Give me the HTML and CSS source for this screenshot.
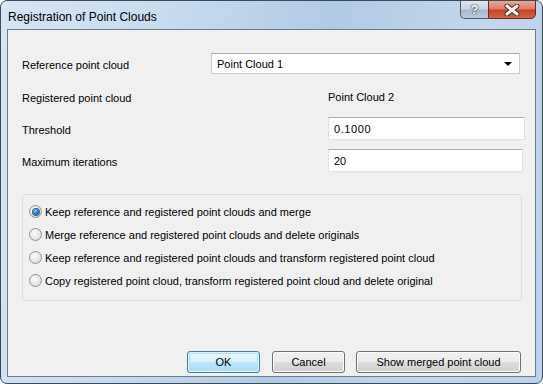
FILE: index.html
```html
<!DOCTYPE html>
<html>
<head>
  <title>Registration of Point Clouds</title>
  <meta charset="UTF-8">
  <link rel="stylesheet" href="styles.css">
</head>
<body>
  <div class="window">
    <div class="titlebar">
      <span class="title">Registration of Point Clouds</span>
      <div class="caption-btns">
        <div class="cap help">?</div>
        <div class="cap close">
          <svg width="16" height="12" viewBox="0 0 16 12">
            <path d="M3 2 L13 10 M13 2 L3 10" stroke="#4a2a24" stroke-width="5" stroke-linecap="round"/>
            <path d="M3 2 L13 10 M13 2 L3 10" stroke="#ffffff" stroke-width="3" stroke-linecap="round"/>
          </svg>
        </div>
      </div>
    </div>

    <div class="client">
      <!-- point cloud settings -->
      <div class="form">
        <div class="row row-combo">
          <span class="label label-short">Reference point cloud</span>
          <div class="combo">
            <span>Point Cloud 1</span>
            <span class="arrow"></span>
          </div>
        </div>
        <div class="row row-text">
          <span class="label">Registered point cloud</span>
          <span class="value">Point Cloud 2</span>
        </div>
        <div class="row row-input">
          <span class="label">Threshold</span>
          <div class="textbox wide">0.1000</div>
        </div>
        <div class="row row-input">
          <span class="label">Maximum iterations</span>
          <div class="textbox">20</div>
        </div>
      </div>

      <!-- result mode -->
      <div class="group">
        <label class="radio-row"><span class="radio checked"></span>Keep reference and registered point clouds and merge</label>
        <label class="radio-row"><span class="radio"></span>Merge reference and registered point clouds and delete originals</label>
        <label class="radio-row"><span class="radio"></span>Keep reference and registered point clouds and transform registered point cloud</label>
        <label class="radio-row"><span class="radio"></span>Copy registered point cloud, transform registered point cloud and delete original</label>
      </div>

      <div class="buttons">
        <div class="btn btn-default">OK</div>
        <div class="btn">Cancel</div>
        <div class="btn btn-wide">Show merged point cloud</div>
      </div>
    </div>
  </div>
</body>
</html>
```

FILE: styles.css
```css
body {
  margin: 0;
  font-family: "Liberation Sans", Arial, sans-serif;
  font-size: 11px;
  color: #000;
  background: #ffffff;
}
.window {
  width: 543px;
  height: 384px;
  box-sizing: border-box;
  border: 1px solid #3f4a57;
  border-radius: 7px;
  background: linear-gradient(100deg, #d6e5f4 0%, #c6daef 30%, #b1cae5 55%, #c3d7ed 80%, #bcd2ea 100%);
  display: flex;
  flex-direction: column;
  overflow: hidden;
}
.titlebar {
  height: 28px;
  display: flex;
  justify-content: space-between;
  align-items: flex-start;
}
.title {
  font-size: 12px;
  margin: 9px 0 0 7px;
  color: #000;
}
.caption-btns {
  display: flex;
  margin-right: 6px;
  margin-top: -1px;
}
.cap {
  height: 19px;
  box-sizing: border-box;
  border: 1px solid #4b5b70;
  display: flex;
  align-items: center;
  justify-content: center;
}
.help {
  width: 28px;
  border-right: none;
  border-radius: 0 0 0 5px;
  background: linear-gradient(#dfe7f0 0%, #c9d5e2 45%, #a8b9cc 55%, #bccbdb 100%);
  color: #fff;
  font-weight: bold;
  font-size: 13px;
  text-shadow: 0 0 1px #3a4a5c, 0 0 1px #3a4a5c, 0 0 2px #3a4a5c;
}
.close {
  width: 48px;
  border-radius: 0 0 5px 0;
  border-color: #6b2a1f;
  background: linear-gradient(#e9a99b 0%, #dc7d68 45%, #c7432a 55%, #d0664b 100%);
}
.client {
  flex: 1;
  margin: 0 6px 6px 6px;
  border: 1px solid #6d7a8a;
  background: #f0f0f0;
  display: flex;
  flex-direction: column;
}
.form {
  padding: 23px 0 0 14px;
}
.row {
  display: flex;
  align-items: center;
}
.label {
  width: 306px;
  padding-top: 2px;
}
.label-short {
  width: 189px;
}
.row-combo {
  height: 21px;
}
.row-text {
  height: 22px;
  margin-top: 12px;
}
.row-input {
  height: 23px;
  margin-top: 9px;
}
.combo {
  width: 309px;
  height: 21px;
  box-sizing: border-box;
  border: 1px solid #c8cacf;
  border-top-color: #a9abb1;
  background: #fff;
  display: flex;
  align-items: center;
  justify-content: space-between;
  padding: 0 7px 0 5px;
}
.arrow {
  width: 0;
  height: 0;
  border-left: 4px solid transparent;
  border-right: 4px solid transparent;
  border-top: 4px solid #000;
  margin-top: 1px;
}
.textbox {
  width: 195px;
  height: 23px;
  box-sizing: border-box;
  border: 1px solid #dfe2e8;
  border-top-color: #abadb3;
  background: #fff;
  padding: 0 5px;
  display: flex;
  align-items: center;
}
.textbox.wide {
  width: 197px;
  letter-spacing: 0.6px;
}
.group {
  margin: 22px 13px 0 14px;
  border: 1px solid #d5dfe5;
  border-radius: 3px;
  padding: 5px 0 8px 5px;
}
.radio-row {
  height: 23px;
  display: flex;
  align-items: center;
}
.radio {
  width: 13px;
  height: 13px;
  box-sizing: border-box;
  border-radius: 50%;
  border: 1px solid #929292;
  background: radial-gradient(circle at 40% 35%, #fbfbfb 0%, #e4e4e4 60%, #d0d0d0 100%);
  margin-right: 3px;
  margin-left: 1px;
  display: flex;
  align-items: center;
  justify-content: center;
}
.radio.checked::after {
  content: "";
  width: 6px;
  height: 6px;
  border-radius: 50%;
  background: radial-gradient(circle at 40% 35%, #8fd0f7 0%, #1f7fc6 45%, #0b3f75 100%);
  box-shadow: 0 0 0 1px #3d5f80;
}
.buttons {
  margin-top: auto;
  margin-bottom: 3px;
  display: flex;
  justify-content: flex-end;
  gap: 12px;
  padding-right: 14px;
}
.btn {
  width: 73px;
  height: 22px;
  box-sizing: border-box;
  border: 1px solid #707070;
  border-radius: 3px;
  background: linear-gradient(#f2f2f2 0%, #ebebeb 50%, #dddddd 51%, #cfcfcf 100%);
  box-shadow: inset 0 0 0 1px #fcfcfc;
  display: flex;
  align-items: center;
  justify-content: center;
}
.btn-default {
  border-color: #3c7fb1;
  background: linear-gradient(#eaf6fd 0%, #d9f0fc 50%, #bee6fd 51%, #a7d9f5 100%);
  box-shadow: inset 0 0 0 1px #dff3fd, inset 0 0 0 2px #b8e1f7;
}
.btn-wide {
  width: 165px;
  margin-left: -1px;
}
```
